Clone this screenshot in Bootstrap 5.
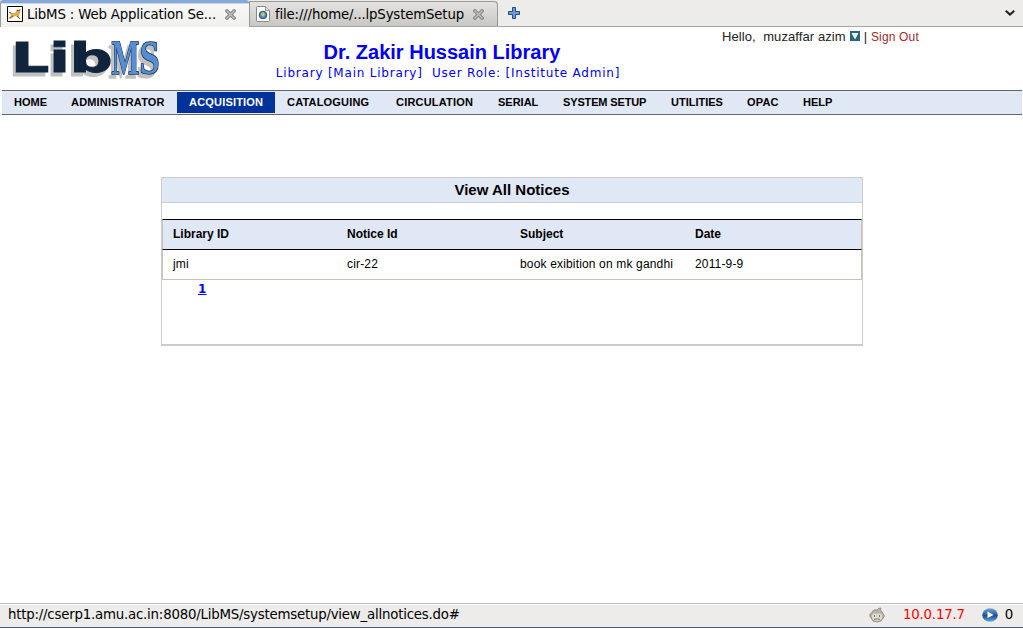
<!DOCTYPE html>
<html lang="en">
<head>
<meta charset="utf-8">
<meta name="viewport" content="width=device-width, initial-scale=1">
<title>LibMS : Web Application</title>
<link href="https://cdn.jsdelivr.net/npm/bootstrap@5.3.0/dist/css/bootstrap.min.css" rel="stylesheet">
<style>
body{font-family:"Liberation Sans",Arial,sans-serif;color:#000;background:#fff;height:628px;font-size:13px;line-height:15px}
svg{display:block;flex:none}
.tabs-strip{height:27px;background:#edecea;border-bottom:1px solid #a5a5a3;font:13.33px/16px "DejaVu Sans",sans-serif;letter-spacing:-.17px}
.tab-on{width:249px;height:27px;padding:3px 0 0 6px;background:linear-gradient(#f8f8f7,#f1f0ef);border-top:3px solid #87a9d8;border-left:1px solid #999;border-radius:3px 3px 0 0;box-shadow:inset 0 1px #c6d8ef}
.tab-off{width:249px;height:26px;margin-top:1px;padding:4px 0 0 6px;background:linear-gradient(#e4e3e1,#c9c7c4);border:1px solid #979795;border-bottom-color:#a5a5a3;border-radius:0 4px 0 0}
.tab-label{white-space:nowrap;padding-top:1px}
.tab-close{margin:3px 13px 0 auto}
.app-head{height:63px}
.head-logo{width:180px;flex:none}
.logo-art{filter:drop-shadow(-3px 4px 0 #c0c0c0)}
.head-name{width:524px;flex:none;color:#0000f5}
.head-name h1{font-size:20px;line-height:23px;font-weight:bold;margin:14px 0 0}
.head-name div{font:12px/15px "DejaVu Sans",sans-serif;letter-spacing:.79px;margin-top:2px;padding-left:12px;white-space:pre}
.head-user{padding:2px 0 0 18px;color:#222;white-space:pre;letter-spacing:.09px}
.head-user a{color:#a52a2a;font-size:12px;letter-spacing:.16px;padding-top:1px}
.main-nav{display:grid;grid-template-columns:57px 118px 98px 109px 102px 65px 108px 76px 56px 60px;height:25px;margin:0 1px 0 2px;background:#e0e7f5;border-top:1px solid #666;border-bottom:1px solid #666;padding:1px 0}
.main-nav .nav-link{font-size:11px;line-height:13px;font-weight:bold;color:#000;padding:4px 0 4px 12px;height:21px;white-space:nowrap}
.main-nav .nav-link.wide-set{letter-spacing:.19px}
.main-nav .nav-link.tight-set{letter-spacing:-.14px}
.main-nav .nav-link.active{background:#039;color:#fff}
.notices{width:702px;height:169px;margin:62px 0 0 161px;border:1px solid #ccc;border-bottom-width:2px}
.notices h2{font-size:15px;line-height:24px;height:25px;font-weight:bold;margin:0;background:#e0e7f5;border-bottom:1px solid #ccc}
.grid-rows{margin-top:16px;font-size:12px;line-height:14px}
.grid-rows>div{border:solid #c5c5b5;border-width:0 1px;display:grid;grid-template-columns:174px 173px 175px 1fr;padding:0 0 2px 10px;align-items:center;white-space:nowrap}
.grid-rows>.heads{height:31px;border-top:1px solid #000;border-bottom:1px solid #000;background:#e0e7f5;font-weight:bold}
.grid-rows>.vals{height:30px;border-bottom:1px solid #c5c5b5;letter-spacing:.16px}
.page-no{font:bold 12px/14px "DejaVu Sans",sans-serif;color:#00f;margin:2px 0 0 36px;display:inline-block}
.status{height:25px;background:#edecea;border-top:1px solid #bababa;border-bottom:1px solid #48607f;box-shadow:inset 0 1px #fff;padding:0 10px 2px 8px;font:13.33px/16px "DejaVu Sans",sans-serif;letter-spacing:-.21px}
</style>
</head>
<body class="d-flex flex-column overflow-hidden">
<div class="tabs-strip d-flex flex-shrink-0">
  <div class="tab-on d-flex flex-shrink-0">
    <svg width="16" height="16" viewBox="0 0 16 16"><path d="M.5.5h15v15H.5z" fill="#fff" stroke="#000"/><path d="M2 6l2 1 4 0 2-4 1 1 3-1-1 4-1 2v2l2 2-3-1-2-2-3 1-3 2-2-1 3-2z" fill="#e0ad55"/><path d="M2 6l2 1M10 4l1 1 2-1M3 12l3-2M10 10l3 3" fill="none" stroke="#775729"/></svg>
    <span class="tab-label ms-1">LibMS : Web Application Se...</span>
    <svg class="tab-close" width="11" height="11" viewBox="0 0 11 11"><path d="M2 2l7 7M9 2L2 9" stroke="#858583" stroke-width="3.4" stroke-linecap="square"/><path d="M2 2l7 7M9 2L2 9" stroke="#c0c0be" stroke-width="1.4" stroke-linecap="square"/></svg>
  </div>
  <div class="tab-off d-flex flex-shrink-0">
    <svg width="14" height="16" viewBox="0 0 14 16"><path d="M.5 1.5Q.5.5 1.500.5h8l4 4v10q0 1-1 1h-11q-1 0-1-1z" fill="#fff" stroke="#888"/><path d="M9.500.5v4h4" fill="#ddd" stroke="#999"/><circle cx="7" cy="9" r="3.800" fill="#4f83b8" stroke="#2d5277"/><path d="M5 7l3-1 1 3-2 2-2-2z" fill="#b9c764"/></svg>
    <span class="tab-label" style="margin-left:5px">file:///home/...lpSystemSetup</span>
    <svg class="tab-close" width="11" height="11" viewBox="0 0 11 11"><path d="M2 2l7 7M9 2L2 9" stroke="#858583" stroke-width="3.4" stroke-linecap="square"/><path d="M2 2l7 7M9 2L2 9" stroke="#c0c0be" stroke-width="1.4" stroke-linecap="square"/></svg>
  </div>
  <svg style="margin:7px 0 0 10px" width="12" height="12" viewBox="0 0 12 12"><path d="M4.500.5h3v4h4v3h-4v4h-3v-4h-4v-3h4z" fill="#6f9bd2" stroke="#204a87"/></svg>
  <svg class="ms-auto" style="margin:10px 8px 0 0" width="10" height="6" viewBox="0 0 10 6"><path d="M.7.8L5 4.600 9.300.8" fill="none" stroke="#222" stroke-width="2"/></svg>
</div>
<header class="app-head d-flex flex-shrink-0">
  <div class="head-logo">
    <svg class="logo-art" width="180" height="60" viewBox="0 27 180 60" role="img" aria-label="LibMS">
      <text transform="translate(11 71.500) scale(1.480 1)" font-family="DejaVu Sans" font-weight="bold" font-size="40.500" fill="#10243e" stroke="#10243e">Lib</text>
      <g font-family="Liberation Serif" font-weight="bold" font-size="49" fill="#558ed5" stroke="#10243e" stroke-width="1.600" paint-order="stroke"><text transform="translate(111.500 73.500) scale(.6 1)">M</text><text transform="translate(139.500 73.500) scale(.74 1)">S</text></g>
    </svg>
  </div>
  <div class="head-name text-center"><h1>Dr. Zakir Hussain Library</h1><div>Library [Main Library]  User Role: [Institute Admin]</div></div>
  <div class="head-user d-flex align-items-start"><span>Hello,  muzaffar azim</span><svg style="margin:2px 4px 0 4px" width="10" height="10" viewBox="0 0 10 10"><path d="M0 0h10v10H0z" fill="#28677c"/><path d="M1.500 2h7L5 8.500z" fill="#eef7f8"/></svg><span>| </span><a href="#" class="text-decoration-none">Sign Out</a></div>
</header>
<nav class="main-nav flex-shrink-0">
  <a class="nav-link" href="#">HOME</a><a class="nav-link wide-set" href="#">ADMINISTRATOR</a><a class="nav-link wide-set active" href="#">ACQUISITION</a><a class="nav-link wide-set" href="#">CATALOGUING</a><a class="nav-link wide-set" href="#">CIRCULATION</a><a class="nav-link" href="#">SERIAL</a><a class="nav-link tight-set" href="#">SYSTEM SETUP</a><a class="nav-link" href="#">UTILITIES</a><a class="nav-link wide-set" href="#">OPAC</a><a class="nav-link" href="#">HELP</a>
</nav>
<main class="flex-grow-1">
  <section class="notices">
    <h2 class="text-center">View All Notices</h2>
    <div class="grid-rows">
      <div class="heads"><span>Library ID</span><span>Notice Id</span><span>Subject</span><span>Date</span></div>
      <div class="vals"><span>jmi</span><span>cir-22</span><span>book exibition on mk gandhi</span><span>2011-9-9</span></div>
    </div>
    <a class="page-no" href="#">1</a>
  </section>
</main>
<footer class="status d-flex align-items-center flex-shrink-0">
  <span>http://cserp1.amu.ac.in:8080/LibMS/systemsetup/view_allnotices.do#</span>
  <svg class="ms-auto" style="margin-right:18px" width="16" height="16" viewBox="0 0 16 16"><path d="M2.500 6Q4 2 8 3q1-2 4-2-1 2 0 3 2 1 2 3 2 1 1 3l-1 1q-1 4-6 4t-6-4Q0 9 1 7z" fill="#b3b0a6" stroke="#8a877e" stroke-width=".8"/><path d="M3 8q2-3 5-1 3-2 5 1v3q-1 3-5 3t-5-3z" fill="#dedbd3"/><path d="M5.500 8v2M10.500 8v2M5 12.500q3-1.500 6 0" fill="none" stroke="#77746c"/></svg>
  <span style="color:#f00">10.0.17.7</span>
  <svg style="margin:0 7px 0 17px" width="16" height="16" viewBox="0 0 16 16"><defs><linearGradient id="orb" x2="0" y2="1"><stop stop-color="#72a4d5"/><stop offset=".45" stop-color="#3465a4"/><stop offset=".5" stop-color="#174681"/><stop offset="1" stop-color="#5cabe6"/></linearGradient></defs><ellipse cx="8" cy="8" rx="7.800" ry="6.800" fill="url(#orb)"/><path d="M5.500 4.500L11.500 8l-6 3z" fill="#fff"/></svg>
  <span>0</span>
</footer>
<script src="https://cdn.jsdelivr.net/npm/bootstrap@5.3.0/dist/js/bootstrap.bundle.min.js"></script>
</body>
</html>
